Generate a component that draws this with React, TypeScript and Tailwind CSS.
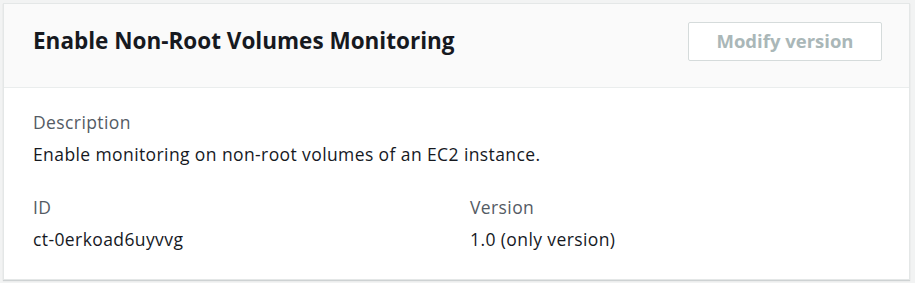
export default function App() {
  return (
    <div className="min-h-screen bg-[#f2f3f3] p-[3px] font-['Open_Sans',sans-serif]">
      <div className="w-[907px] h-[277px] bg-white border border-[#e4e7e7] shadow-[0_1px_1px_rgba(0,28,36,0.15)]">
        {/* Header */}
        <div className="h-[84px] bg-[#fafafa] border-b border-[#eaeded] flex items-center justify-between pl-[29px] pr-[27px] pb-[8px]">
          <h2 className="text-[22.5px] font-bold text-[#16191f] leading-none">Enable Non-Root Volumes Monitoring</h2>
          <button
            disabled
            className="w-[194px] h-[39px] bg-white border border-[#d5dbdb] rounded-[2px] text-[18.5px] font-bold text-[#aab7b8] leading-none"
          >
            Modify version
          </button>
        </div>

        {/* Body */}
        <div className="pl-[29px] pt-[18px] text-[17.5px] tracking-[0.4px] leading-[32px]">
          <div className="text-[#545b64]">Description</div>
          <div className="text-[#16191f]">Enable monitoring on non-root volumes of an EC2 instance.</div>
          <div className="flex mt-[21px]">
            <div className="w-[437px]">
              <div className="text-[#545b64]">ID</div>
              <div className="text-[#16191f]">ct-0erkoad6uyvvg</div>
            </div>
            <div>
              <div className="text-[#545b64]">Version</div>
              <div className="text-[#16191f]">1.0 (only version)</div>
            </div>
          </div>
        </div>
      </div>
    </div>
  )
}
